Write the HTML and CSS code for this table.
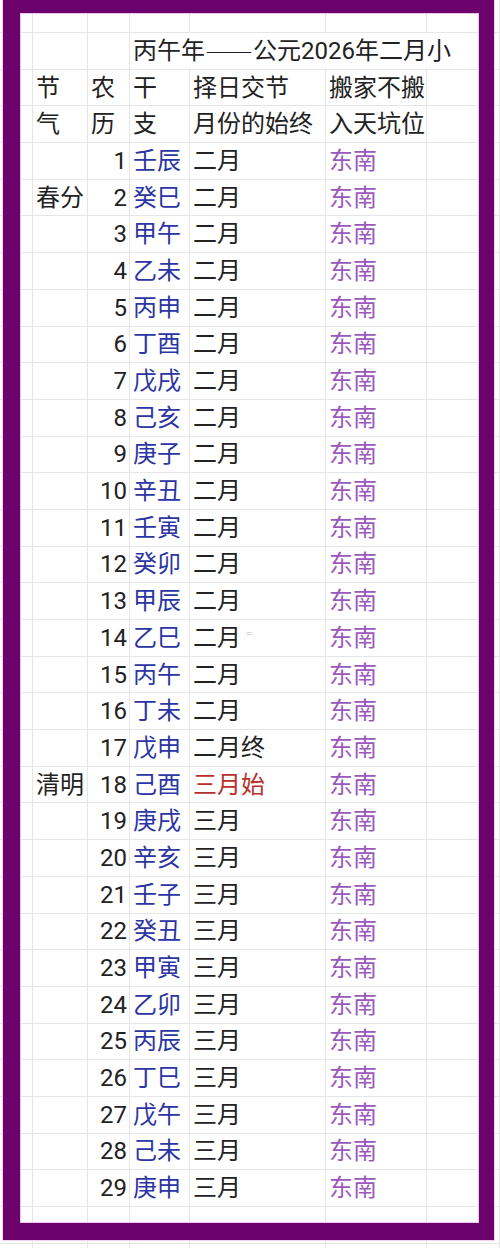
FILE: index.html
```html
<!DOCTYPE html>
<html lang="zh">
<head>
<meta charset="utf-8">
<title>丙午年二月</title>
<link rel="stylesheet" href="styles.css">
</head>
<body>
<div class="page">
  <div class="sheet">
    <div class="row"><span></span><span></span><span></span><span></span><span></span><span></span><span></span></div>
    <div class="row"><span></span><span></span><span></span><span class="title">丙午年<b class="dash">——</b>公元2026年二月小</span></div>
    <div class="row"><span></span><span>节</span><span>农</span><span>干</span><span>择日交节</span><span>搬家不搬</span><span></span></div>
    <div class="row"><span></span><span>气</span><span>历</span><span>支</span><span>月份的始终</span><span>入天坑位</span><span></span></div>
    <div class="row"><span></span><span></span><span class="num">1</span><span class="gz">壬辰</span><span>二月</span><span class="dir">东南</span><span></span></div>
    <div class="row"><span></span><span>春分</span><span class="num">2</span><span class="gz">癸巳</span><span>二月</span><span class="dir">东南</span><span></span></div>
    <div class="row"><span></span><span></span><span class="num">3</span><span class="gz">甲午</span><span>二月</span><span class="dir">东南</span><span></span></div>
    <div class="row"><span></span><span></span><span class="num">4</span><span class="gz">乙未</span><span>二月</span><span class="dir">东南</span><span></span></div>
    <div class="row"><span></span><span></span><span class="num">5</span><span class="gz">丙申</span><span>二月</span><span class="dir">东南</span><span></span></div>
    <div class="row"><span></span><span></span><span class="num">6</span><span class="gz">丁酉</span><span>二月</span><span class="dir">东南</span><span></span></div>
    <div class="row"><span></span><span></span><span class="num">7</span><span class="gz">戊戌</span><span>二月</span><span class="dir">东南</span><span></span></div>
    <div class="row"><span></span><span></span><span class="num">8</span><span class="gz">己亥</span><span>二月</span><span class="dir">东南</span><span></span></div>
    <div class="row"><span></span><span></span><span class="num">9</span><span class="gz">庚子</span><span>二月</span><span class="dir">东南</span><span></span></div>
    <div class="row"><span></span><span></span><span class="num">10</span><span class="gz">辛丑</span><span>二月</span><span class="dir">东南</span><span></span></div>
    <div class="row"><span></span><span></span><span class="num">11</span><span class="gz">壬寅</span><span>二月</span><span class="dir">东南</span><span></span></div>
    <div class="row"><span></span><span></span><span class="num">12</span><span class="gz">癸卯</span><span>二月</span><span class="dir">东南</span><span></span></div>
    <div class="row"><span></span><span></span><span class="num">13</span><span class="gz">甲辰</span><span>二月</span><span class="dir">东南</span><span></span></div>
    <div class="row"><span></span><span></span><span class="num">14</span><span class="gz">乙巳</span><span>二月<i class="mark">==</i></span><span class="dir">东南</span><span></span></div>
    <div class="row"><span></span><span></span><span class="num">15</span><span class="gz">丙午</span><span>二月</span><span class="dir">东南</span><span></span></div>
    <div class="row"><span></span><span></span><span class="num">16</span><span class="gz">丁未</span><span>二月</span><span class="dir">东南</span><span></span></div>
    <div class="row"><span></span><span></span><span class="num">17</span><span class="gz">戊申</span><span>二月终</span><span class="dir">东南</span><span></span></div>
    <div class="row"><span></span><span>清明</span><span class="num">18</span><span class="gz">己酉</span><span class="red">三月始</span><span class="dir">东南</span><span></span></div>
    <div class="row"><span></span><span></span><span class="num">19</span><span class="gz">庚戌</span><span>三月</span><span class="dir">东南</span><span></span></div>
    <div class="row"><span></span><span></span><span class="num">20</span><span class="gz">辛亥</span><span>三月</span><span class="dir">东南</span><span></span></div>
    <div class="row"><span></span><span></span><span class="num">21</span><span class="gz">壬子</span><span>三月</span><span class="dir">东南</span><span></span></div>
    <div class="row"><span></span><span></span><span class="num">22</span><span class="gz">癸丑</span><span>三月</span><span class="dir">东南</span><span></span></div>
    <div class="row"><span></span><span></span><span class="num">23</span><span class="gz">甲寅</span><span>三月</span><span class="dir">东南</span><span></span></div>
    <div class="row"><span></span><span></span><span class="num">24</span><span class="gz">乙卯</span><span>三月</span><span class="dir">东南</span><span></span></div>
    <div class="row"><span></span><span></span><span class="num">25</span><span class="gz">丙辰</span><span>三月</span><span class="dir">东南</span><span></span></div>
    <div class="row"><span></span><span></span><span class="num">26</span><span class="gz">丁巳</span><span>三月</span><span class="dir">东南</span><span></span></div>
    <div class="row"><span></span><span></span><span class="num">27</span><span class="gz">戊午</span><span>三月</span><span class="dir">东南</span><span></span></div>
    <div class="row"><span></span><span></span><span class="num">28</span><span class="gz">己未</span><span>三月</span><span class="dir">东南</span><span></span></div>
    <div class="row"><span></span><span></span><span class="num">29</span><span class="gz">庚申</span><span>三月</span><span class="dir">东南</span><span></span></div>
    <div class="row"><span></span><span></span><span></span><span></span><span></span><span></span><span></span></div>
    <div class="row"><span></span><span></span><span></span><span></span><span></span><span></span><span></span></div>
  </div>
  <div class="frame"></div>
</div>
</body>
</html>
```
FILE: styles.css
```css
* { box-sizing: border-box; }

html, body {
  margin: 0;
  padding: 0;
  background: #ffffff;
}

.page {
  position: relative;
  width: 500px;
  height: 1248px;
  overflow: hidden;
  background: #ffffff;
  font-family: Roboto, "Noto Sans CJK SC", sans-serif;
  font-size: 24px;
  color: #222222;
}

.sheet {
  display: flex;
  flex-direction: column;
  margin-top: -3.7px;
}

.row {
  display: grid;
  grid-template-columns: 33px 55px 42px 60px 136px 101px 1fr;
  height: 36.7px;
  flex: none;
}

.row > span {
  display: flex;
  align-items: center;
  padding-left: 3px;
  border-right: 1px solid #e6e6e6;
  border-bottom: 1px solid #e6e6e6;
  white-space: nowrap;
  line-height: 1;
}

.row > .num {
  justify-content: flex-end;
  padding-left: 0;
  padding-right: 2px;
}

.row > .title {
  grid-column: 4 / -1;
}

.dash {
  font-family: "Noto Sans CJK SC", sans-serif;
  font-weight: normal;
  font-feature-settings: "fwid" 1;
}

.gz { color: #2b35a3; }
.dir { color: #9b58bd; }
.red { color: #b8302c; }

.mark {
  font-style: normal;
  font-size: 7px;
  color: #b5b5b5;
  margin-left: 5px;
  align-self: flex-start;
  margin-top: 11px;
  letter-spacing: -1px;
}

.frame {
  position: absolute;
  left: 3px;
  top: 0;
  width: 491px;
  height: 1240px;
  border-style: solid;
  border-color: #6c026c;
  border-width: 13px 15px 17px 17px;
  box-shadow: inset 0 0 0 1px #ecc6ec, 0 0 0 1px #f1d2f1;
  pointer-events: none;
}
```
